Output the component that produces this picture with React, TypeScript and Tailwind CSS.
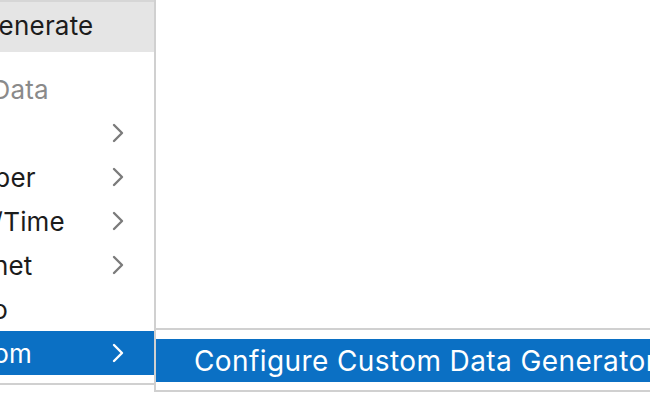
const font = { fontFamily: "Inter, 'Noto Sans', sans-serif" };

const Chevron = ({ white }: { white?: boolean }) => (
  <svg width="12" height="20" viewBox="0 0 12 20" className="shrink-0">
    <polyline
      points="2,2 10,10 2,18"
      fill="none"
      stroke={white ? "#ffffff" : "#7b7b7b"}
      strokeWidth="2.4"
      strokeLinecap="round"
      strokeLinejoin="round"
    />
  </svg>
);

const items = [
  { label: "Text", sub: true },
  { label: "Number", sub: true },
  { label: "Date/Time", sub: true },
  { label: "Internet", sub: true },
  { label: "Audio", sub: false },
  { label: "Custom", sub: true, active: true },
];

export default function App() {
  return (
    <div className="relative w-[650px] h-[400px] overflow-hidden bg-white" style={font}>
      {/* Main menu */}
      <div className="-ml-[70px] w-[226px] border-r-2 border-b-2 border-[#d0d0d0] bg-white pb-[8px] text-[26px] tracking-[0.2px] text-[#1c1c1c]">
        <div className="flex h-[52px] items-center border-t-2 border-[#d6d6d6] bg-[#e5e5e5] pb-[3px] pl-[49px]">
          Generate
        </div>
        <div className="mt-[15px] flex h-[44px] items-center pl-[1px] text-[#8a8a8a]">
          Test Data
        </div>
        {items.map((it) => (
          <div
            key={it.label}
            className={`flex h-[44px] items-center justify-between pl-[6px] pr-[30px] ${
              it.active ? "bg-[#0b70c4] text-white" : ""
            }`}
          >
            <span>{it.label}</span>
            {it.sub && <Chevron white={it.active} />}
          </div>
        ))}
      </div>

      {/* Submenu */}
      <div className="absolute left-[154px] top-[328px] w-[520px] border-2 border-[#d0d0d0] bg-white pt-[9px] pb-[8px] text-[28px] tracking-[0.4px]">
        <div className="flex h-[43px] items-center whitespace-nowrap bg-[#0b70c4] pl-[38px] text-white">
          Configure Custom Data Generator
        </div>
      </div>
    </div>
  );
}
